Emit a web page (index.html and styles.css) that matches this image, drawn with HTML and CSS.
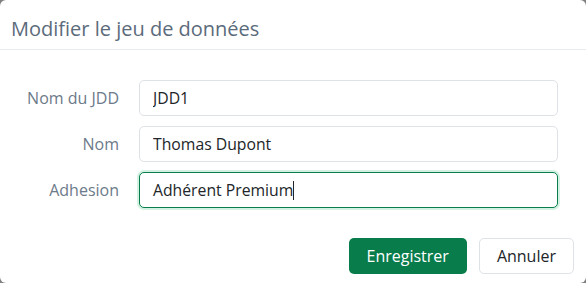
FILE: index.html
```html
<!DOCTYPE html>
<html lang="fr">
<head>
    <meta charset="UTF-8">
    <title>Modifier le jeu de données</title>
    <link rel="stylesheet" href="styles.css">
</head>
<body>
    <div class="modal">
        <div class="modal-header">
            <h5 class="modal-title">Modifier le jeu de données</h5>
        </div>
        <form class="modal-body" onsubmit="return false;">
            <label class="field-label" for="jdd">Nom du JDD</label>
            <input class="field" type="text" id="jdd" value="JDD1">

            <label class="field-label" for="nom">Nom</label>
            <input class="field" type="text" id="nom" value="Thomas Dupont">

            <label class="field-label" for="adhesion">Adhesion</label>
            <div class="field field-focus">Adhérent Premium<span class="caret"></span></div>
        </form>
        <div class="modal-footer">
            <button class="btn btn-save">Enregistrer</button>
            <button class="btn btn-cancel">Annuler</button>
        </div>
    </div>
</body>
</html>
```

FILE: styles.css
```css
html, body {
    margin: 0;
    height: 100%;
    background-color: #808080;
}

body {
    font-family: "Open Sans", "Noto Sans", sans-serif;
    color: #212529;
}

.modal {
    height: 283px;
    background-color: #fff;
    border-radius: 6px;
    display: flex;
    flex-direction: column;
}

.modal-header {
    padding: 17px 11px 8px;
    border-bottom: 1px solid #e9ecef;
}

.modal-title {
    margin: 0;
    font-size: 20px;
    font-weight: 400;
    line-height: 24px;
    color: #5b6b7b;
}

.modal-body {
    display: grid;
    grid-template-columns: 119px 1fr;
    column-gap: 20px;
    row-gap: 10px;
    align-items: center;
    padding: 30px 28px 0 0;
}

.field-label {
    text-align: right;
    font-size: 16px;
    color: #6c7a89;
}

.field {
    box-sizing: border-box;
    height: 36px;
    margin: 0;
    padding: 0 13px;
    font: 15.75px/34px "Open Sans", "Noto Sans", sans-serif;
    color: #212529;
    background-color: #fff;
    border: 1px solid #dee2e6;
    border-radius: 5px;
    outline: none;
}

.field-focus {
    border-color: #0a7d4c;
    box-shadow: 0 0 0 2px #d4f2e3;
}

.caret {
    display: inline-block;
    width: 1px;
    height: 19px;
    vertical-align: -4px;
    background-color: #212529;
}

.modal-footer {
    display: flex;
    justify-content: flex-end;
    gap: 12px;
    padding: 30px 12px 0;
}

.btn {
    height: 36px;
    padding: 0 17px;
    font: 16px "Open Sans", "Noto Sans", sans-serif;
    border-radius: 5px;
    border: 1px solid transparent;
}

.btn-save {
    background-color: #087c4b;
    color: #fff;
}

.btn-cancel {
    background-color: #fff;
    border-color: #dee2e6;
    color: #212529;
}
```
